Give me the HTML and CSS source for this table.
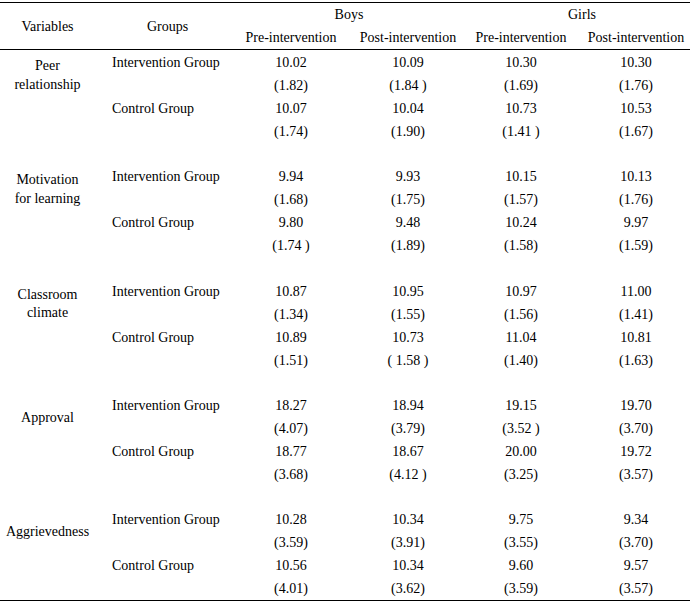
FILE: index.html
```html
<!DOCTYPE html>
<html lang="en">
<head>
<meta charset="utf-8">
<title>Table</title>
<link rel="stylesheet" href="styles.css">
</head>
<body>
<div class="table">
  <div class="head">
    <div class="hvar">Variables</div>
    <div class="hgrp">Groups</div>
    <div class="hboys">Boys</div>
    <div class="hgirls">Girls</div>
    <div class="sub">Pre-intervention</div>
    <div class="sub">Post-intervention</div>
    <div class="sub">Pre-intervention</div>
    <div class="sub last">Post-intervention</div>
  </div>
  <div class="body">
    <div class="block">
      <div class="var">Peer<br>relationship</div>
      <div class="grp">Intervention Group</div><div class="v">10.02</div><div class="v">10.09</div><div class="v">10.30</div><div class="v last">10.30</div>
      <div class="grp"></div><div class="v">(1.82)</div><div class="v">(1.84 )</div><div class="v">(1.69)</div><div class="v last">(1.76)</div>
      <div class="e"></div><div class="grp">Control Group</div><div class="v">10.07</div><div class="v">10.04</div><div class="v">10.73</div><div class="v last">10.53</div>
      <div class="e"></div><div class="grp"></div><div class="v">(1.74)</div><div class="v">(1.90)</div><div class="v">(1.41 )</div><div class="v last">(1.67)</div>
    </div>
    <div class="block">
      <div class="var">Motivation<br>for learning</div>
      <div class="grp">Intervention Group</div><div class="v">9.94</div><div class="v">9.93</div><div class="v">10.15</div><div class="v last">10.13</div>
      <div class="grp"></div><div class="v">(1.68)</div><div class="v">(1.75)</div><div class="v">(1.57)</div><div class="v last">(1.76)</div>
      <div class="e"></div><div class="grp">Control Group</div><div class="v">9.80</div><div class="v">9.48</div><div class="v">10.24</div><div class="v last">9.97</div>
      <div class="e"></div><div class="grp"></div><div class="v">(1.74 )</div><div class="v">(1.89)</div><div class="v">(1.58)</div><div class="v last">(1.59)</div>
    </div>
    <div class="block">
      <div class="var">Classroom<br>climate</div>
      <div class="grp">Intervention Group</div><div class="v">10.87</div><div class="v">10.95</div><div class="v">10.97</div><div class="v last">11.00</div>
      <div class="grp"></div><div class="v">(1.34)</div><div class="v">(1.55)</div><div class="v">(1.56)</div><div class="v last">(1.41)</div>
      <div class="e"></div><div class="grp">Control Group</div><div class="v">10.89</div><div class="v">10.73</div><div class="v">11.04</div><div class="v last">10.81</div>
      <div class="e"></div><div class="grp"></div><div class="v">(1.51)</div><div class="v">( 1.58 )</div><div class="v">(1.40)</div><div class="v last">(1.63)</div>
    </div>
    <div class="block">
      <div class="var">Approval</div>
      <div class="grp">Intervention Group</div><div class="v">18.27</div><div class="v">18.94</div><div class="v">19.15</div><div class="v last">19.70</div>
      <div class="grp"></div><div class="v">(4.07)</div><div class="v">(3.79)</div><div class="v">(3.52 )</div><div class="v last">(3.70)</div>
      <div class="e"></div><div class="grp">Control Group</div><div class="v">18.77</div><div class="v">18.67</div><div class="v">20.00</div><div class="v last">19.72</div>
      <div class="e"></div><div class="grp"></div><div class="v">(3.68)</div><div class="v">(4.12 )</div><div class="v">(3.25)</div><div class="v last">(3.57)</div>
    </div>
    <div class="block">
      <div class="var">Aggrievedness</div>
      <div class="grp">Intervention Group</div><div class="v">10.28</div><div class="v">10.34</div><div class="v">9.75</div><div class="v last">9.34</div>
      <div class="grp"></div><div class="v">(3.59)</div><div class="v">(3.91)</div><div class="v">(3.55)</div><div class="v last">(3.70)</div>
      <div class="e"></div><div class="grp">Control Group</div><div class="v">10.56</div><div class="v">10.34</div><div class="v">9.60</div><div class="v last">9.57</div>
      <div class="e"></div><div class="grp"></div><div class="v">(4.01)</div><div class="v">(3.62)</div><div class="v">(3.59)</div><div class="v last">(3.57)</div>
    </div>
  </div>
</div>
</body>
</html>
```

FILE: styles.css
```css
html, body {
  margin: 0;
  padding: 0;
  background: #fff;
}
body {
  font-family: "Liberation Serif", "Times New Roman", serif;
  font-size: 14px;
  color: #000;
}
.table {
  width: 690px;
  margin-top: 2px;
  border-top: 1px solid #000;
  border-bottom: 1px solid #000;
}
.head {
  display: grid;
  grid-template-columns: 95px 145px 102px 132px 94px 122px;
  grid-template-rows: 23px 23px;
  border-bottom: 1px solid #000;
  line-height: 23px;
  text-align: center;
  white-space: nowrap;
}
.hvar {
  grid-column: 1;
  grid-row: 1 / span 2;
  align-self: center;
}
.hgrp {
  grid-column: 2;
  grid-row: 1 / span 2;
  align-self: center;
}
.hboys {
  grid-column: 3 / span 2;
  grid-row: 1;
  padding-right: 16px;
}
.hgirls {
  grid-column: 5 / span 2;
  grid-row: 1;
}
.sub {
  grid-row: 2;
}
.last {
  padding-left: 14px;
}
.body {
  display: flex;
  flex-direction: column;
  gap: 22.25px;
  padding-top: 1px;
}
.block {
  display: grid;
  grid-template-columns: 95px 145px 102px 132px 94px 122px;
  grid-template-rows: repeat(4, 23px);
  line-height: 23px;
  white-space: nowrap;
}
.var {
  grid-column: 1;
  grid-row: 1 / span 2;
  align-self: center;
  text-align: center;
  line-height: 18.5px;
  padding-top: 3px;
}
.grp {
  padding-left: 17px;
}
.v {
  text-align: center;
}
```
